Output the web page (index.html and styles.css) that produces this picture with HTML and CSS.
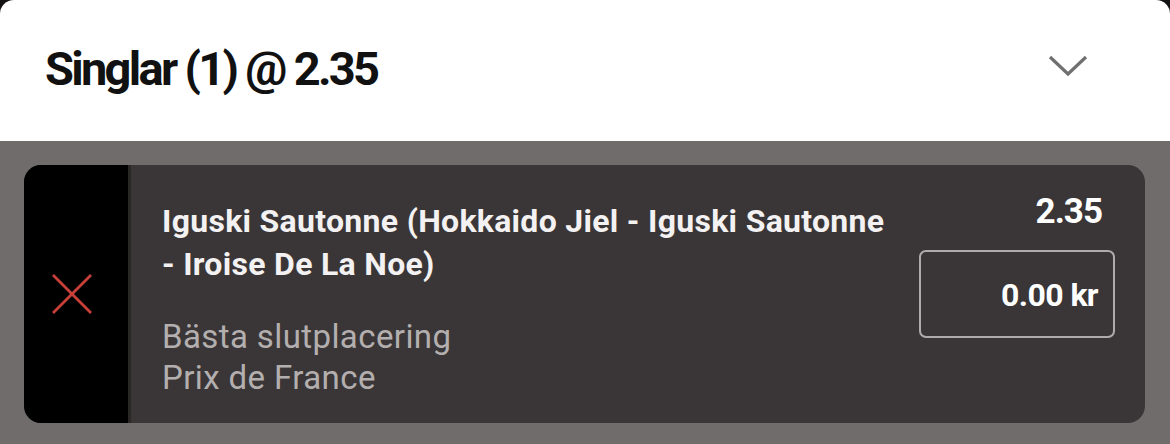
FILE: index.html
```html
<!DOCTYPE html>
<html lang="sv">
<head>
<meta charset="utf-8">
<title>Singlar</title>
<link rel="stylesheet" href="styles.css">
</head>
<body>
<div class="sheet">
  <header class="sheet-head">
    <h1 class="sheet-title">Singlar (1) @ 2.35</h1>
    <svg class="chevron" width="40" height="24" viewBox="0 0 40 24" aria-hidden="true">
      <path d="M2 3 L20 20 L38 3" fill="none" stroke="#707070" stroke-width="3.2"/>
    </svg>
  </header>
  <section class="slip">
    <div class="bet">
      <div class="bet-remove">
        <svg width="40" height="40" viewBox="0 0 40 40" aria-hidden="true">
          <path d="M1 1 L39 39 M39 1 L1 39" stroke="#c9403a" stroke-width="2.8" fill="none"/>
        </svg>
      </div>
      <div class="bet-body">
        <div class="bet-info">
          <div class="bet-name">Iguski Sautonne (Hokkaido Jiel - Iguski Sautonne - Iroise De La Noe)</div>
          <div class="bet-market">Bästa slutplacering<br>Prix de France</div>
        </div>
        <div class="bet-side">
          <div class="bet-odds">2.35</div>
          <div class="bet-stake">0.00 kr</div>
        </div>
      </div>
    </div>
  </section>
</div>
</body>
</html>
```

FILE: styles.css
```css
html, body {
  margin: 0;
  padding: 0;
}
body {
  background: #141212;
  width: 1170px;
  height: 444px;
  overflow: hidden;
  font-family: Roboto, "Liberation Sans", sans-serif;
}
.sheet {
  display: flex;
  flex-direction: column;
  height: 444px;
}
.sheet-head {
  background: #ffffff;
  border-radius: 14px 14px 0 0;
  height: 141px;
  box-sizing: border-box;
  display: flex;
  align-items: center;
  justify-content: space-between;
  padding: 0 82px 4px 45px;
}
.sheet-title {
  margin: 0;
  font-size: 47px;
  font-weight: 700;
  letter-spacing: -2.7px;
  color: #111111;
  line-height: 1;
}
.chevron {
  display: block;
  margin-bottom: 6px;
}
.slip {
  flex: 1;
  background: #716c6c;
  padding: 24px 25px 21px 24px;
}
.bet {
  display: flex;
  height: 258px;
  background: #3a3637;
  border-radius: 17px;
  overflow: hidden;
}
.bet-remove {
  width: 107px;
  background: #000000;
  border-right: 3px solid #2a2727;
  display: flex;
  align-items: center;
  justify-content: center;
  padding-right: 9px;
  box-sizing: border-box;
}
.bet-remove svg {
  display: block;
}
.bet-body {
  flex: 1;
  display: flex;
  gap: 22px;
  padding: 27px 30px 0 31px;
}
.bet-info {
  flex: 1;
  padding-top: 8px;
}
.bet-name {
  font-size: 32px;
  font-weight: 700;
  line-height: 43px;
  letter-spacing: 0.3px;
  color: #f3f1f1;
}
.bet-market {
  margin-top: 30px;
  font-size: 33px;
  font-weight: 400;
  line-height: 41px;
  letter-spacing: 0.4px;
  color: #b4afaf;
}
.bet-side {
  width: 196px;
  display: flex;
  flex-direction: column;
  align-items: flex-end;
}
.bet-odds {
  font-size: 35px;
  font-weight: 700;
  line-height: 40px;
  letter-spacing: -1px;
  color: #ffffff;
  margin-right: 13px;
}
.bet-stake {
  margin-top: 18px;
  width: 196px;
  height: 88px;
  box-sizing: border-box;
  border: 2px solid #aeabab;
  border-radius: 7px;
  display: flex;
  align-items: center;
  justify-content: flex-end;
  padding: 2px 15px 0 0;
  font-size: 32px;
  font-weight: 700;
  letter-spacing: -0.6px;
  color: #ffffff;
}
```
